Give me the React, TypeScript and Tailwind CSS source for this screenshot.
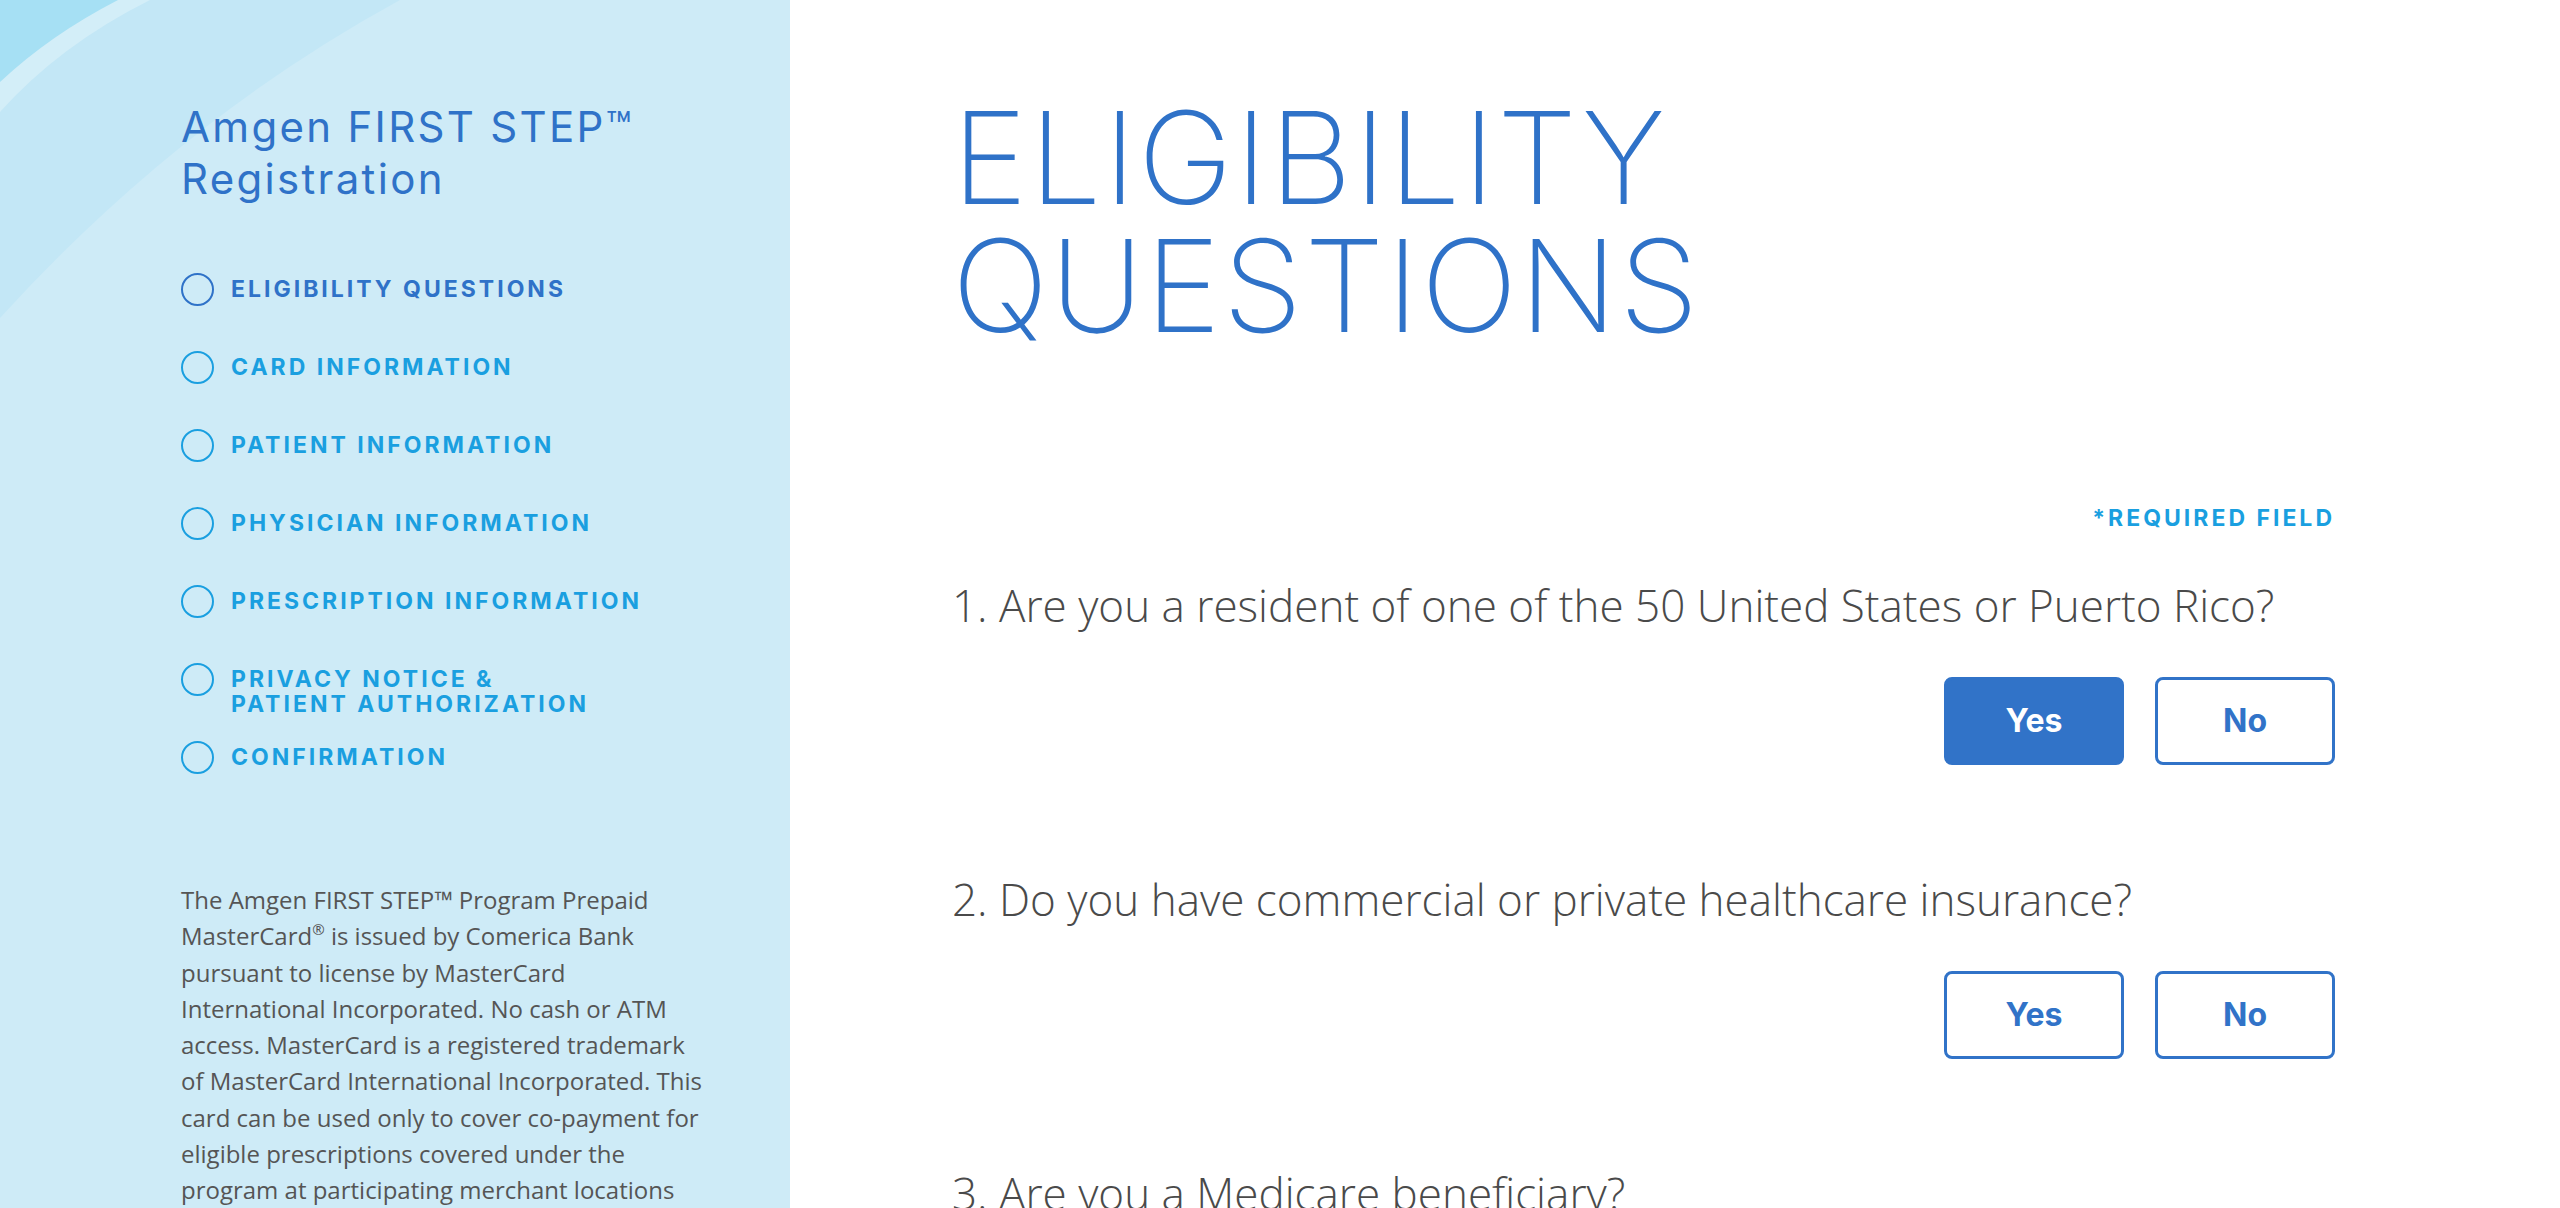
import React, { useState } from 'react';

const steps = [
  'ELIGIBILITY QUESTIONS',
  'CARD INFORMATION',
  'PATIENT INFORMATION',
  'PHYSICIAN INFORMATION',
  'PRESCRIPTION INFORMATION',
  'PRIVACY NOTICE &\nPATIENT AUTHORIZATION',
  'CONFIRMATION',
];

const questions = [
  '1. Are you a resident of one of the 50 United States or Puerto Rico?',
  '2. Do you have commercial or private healthcare insurance?',
  '3. Are you a Medicare beneficiary?',
];

const heading = { fontFamily: 'Inter, "Liberation Sans", sans-serif' };
const body = { fontFamily: '"Open Sans", "Liberation Sans", sans-serif' };

function Swoosh() {
  return (
    <svg className="absolute left-0 top-0" width="790" height="420" viewBox="0 0 790 420">
      <path d="M0 0 L400 0 Q180 120 0 318 Z" fill="#c3e7f6" />
      <path d="M0 0 L150 0 Q60 45 0 112 Z" fill="#d3eef8" />
      <path d="M0 0 L118 0 Q50 35 0 82 Z" fill="#a6e0f4" />
    </svg>
  );
}

function Sidebar() {
  return (
    <aside className="relative w-[790px] shrink-0 bg-[#ceebf7] overflow-hidden">
      <Swoosh />
      <div className="relative pl-[181px] pr-[60px] pt-[101px]">
        <h2 className="text-[42px] leading-[52px] tracking-[0.055em] text-[#2f72c8] font-normal" style={heading}>
          Amgen FIRST STEP™
          <br />
          Registration
        </h2>
        <ul className="mt-[68px]">
          {steps.map((s, i) => (
            <li key={s} className="flex items-start h-[78px]">
              <span
                className={
                  'w-[33px] h-[33px] rounded-full border-2 shrink-0 ' +
                  (i === 0 ? 'border-[#2f72c8]' : 'border-[#1a9fe0]')
                }
              />
              <span
                className={
                  'ml-[17px] mt-[4px] whitespace-pre-line text-[23px] leading-[25px] font-bold tracking-[3px] ' +
                  (i === 0 ? 'text-[#2f72c8]' : 'text-[#1a9fe0]')
                }
                style={heading}
              >
                {s}
              </span>
            </li>
          ))}
        </ul>
        <p className="mt-[63px] w-[528px] text-[24px] leading-[36.3px] text-[#555555]" style={body}>
          The Amgen FIRST STEP™ Program Prepaid MasterCard
          <sup className="text-[15px] top-[-0.7em]">®</sup> is issued by Comerica Bank pursuant to license by
          MasterCard International Incorporated. No cash or ATM access. MasterCard is a registered trademark of
          MasterCard International Incorporated. This card can be used only to cover co-payment for eligible
          prescriptions covered under the program at participating merchant locations
        </p>
      </div>
    </aside>
  );
}

function Question({ text, value, onChange }: { text: string; value: string | null; onChange: (v: string) => void }) {
  return (
    <div className="pb-[104px]">
      <p className="text-[44px] leading-[60px] font-light text-[#4a4a4a]" style={body}>
        {text}
      </p>
      <div className="flex justify-end gap-[31px] mt-[42px]">
        {['Yes', 'No'].map((opt) => (
          <button
            key={opt}
            onClick={() => onChange(opt)}
            className={
              'w-[180px] h-[88px] rounded-[8px] border-[3px] border-[#3173c8] text-[32px] font-bold ' +
              (value === opt ? 'bg-[#3173c8] text-white' : 'bg-white text-[#3173c8]')
            }
            style={heading}
          >
            {opt}
          </button>
        ))}
      </div>
    </div>
  );
}

export default function App() {
  const [answers, setAnswers] = useState<(string | null)[]>(['Yes', null, null]);

  return (
    <div className="flex min-h-[1208px] h-[1208px] overflow-hidden bg-white">
      <Sidebar />
      <main className="flex-1 pl-[162px] pr-[225px] pt-[94px]">
        <h1 className="text-[128px] leading-[128px] font-extralight tracking-[0.015em] text-[#2f72c8]" style={heading}>
          ELIGIBILITY
          <br />
          QUESTIONS
        </h1>
        <div className="mt-[151px] text-right text-[23px] font-bold tracking-[3px] text-[#1a9fe0]" style={heading}>
          *REQUIRED FIELD
        </div>
        <div className="mt-[39px]">
          {questions.map((q, i) => (
            <Question
              key={q}
              text={q}
              value={answers[i]}
              onChange={(v) => setAnswers((a) => a.map((x, j) => (j === i ? v : x)))}
            />
          ))}
        </div>
      </main>
    </div>
  );
}
